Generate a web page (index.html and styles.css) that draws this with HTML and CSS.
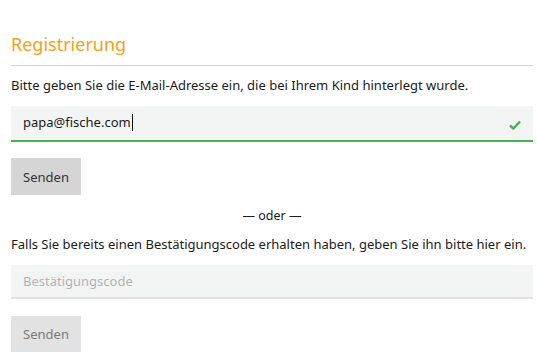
FILE: index.html
```html
<!DOCTYPE html>
<html lang="de">
<head>
<meta charset="utf-8">
<link rel="stylesheet" href="styles.css">
</head>
<body>
<main class="page">
  <h1 class="title">Registrierung</h1>
  <p class="text">Bitte geben Sie die E-Mail-Adresse ein, die bei Ihrem Kind hinterlegt wurde.</p>
  <div class="field field-valid">
    <span class="value">papa@fische.com</span><span class="caret"></span>
    <svg class="check" width="12" height="10" viewBox="0 0 12 10"><path d="M1 5.5 L4.3 8.5 L11 1.5" fill="none" stroke="#4caf50" stroke-width="2.4"/></svg>
  </div>
  <button class="btn">Senden</button>
  <div class="or">— oder —</div>
  <p class="text">Falls Sie bereits einen Bestätigungscode erhalten haben, geben Sie ihn bitte hier ein.</p>
  <div class="field field-empty"><span class="placeholder">Bestätigungscode</span></div>
  <button class="btn btn-disabled">Senden</button>
</main>
</body>
</html>
```
FILE: styles.css
```css
html, body { margin: 0; padding: 0; background: #fff; }
body { font-family: "Noto Sans", "Open Sans", sans-serif; color: #1a1a1a; }
.page { padding: 0 4px 0 11px; display: flex; flex-direction: column; align-items: flex-start; }
.title {
  margin: 31px 0 0; font-size: 18px; font-weight: 400; color: #f7a01b;
  line-height: 26px; width: 100%; padding-bottom: 8px; border-bottom: 1px solid #d2d2d2;
}
.text { margin: 10px 0 0; font-size: 13px; line-height: 18px; }
.field {
  box-sizing: border-box; width: 100%; height: 36px; background: #f3f5f4;
  display: flex; align-items: center; padding: 0 12px; font-size: 13px; position: relative;
}
.field-valid { margin-top: 12px; border-bottom: 2px solid #4caf50; padding-bottom: 2px; }
.caret { display: inline-block; width: 1px; height: 17px; background: #111; margin-left: 1px; }
.check { position: absolute; right: 12px; top: 14px; }
.field-empty { margin-top: 12px; border-bottom: 2px solid #e2e2e2; height: 34px; padding-bottom: 0; }
.placeholder { color: #b3b3b3; font-size: 13px; }
.value { color: #1a1a1a; }
.btn {
  margin-top: 16px; height: 37px; width: 70px; border: 0; background: #d5d5d5;
  font-family: inherit; font-size: 13px; color: #333; padding: 0;
}
.btn-disabled { background: #e2e2e2; color: #7a7a7a; margin-top: 17px; height: 36px; }
.or { align-self: stretch; text-align: center; font-size: 12.5px; margin-top: 12px; line-height: 18px; color: #1a1a1a; }
```
